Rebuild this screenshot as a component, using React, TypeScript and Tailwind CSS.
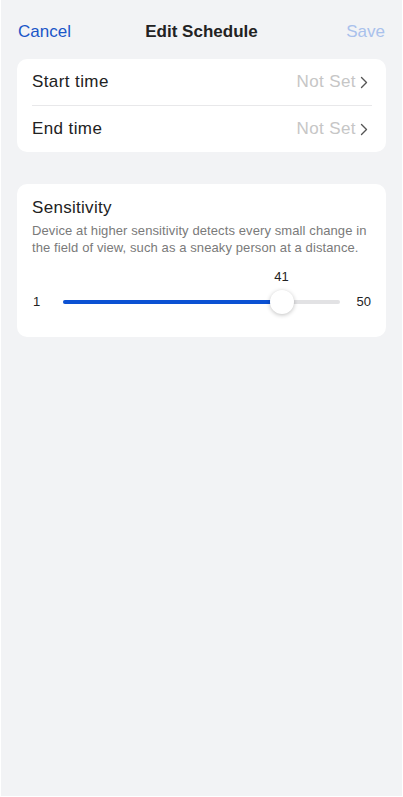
import React from 'react';

const font = { fontFamily: '"Liberation Sans", Arial, sans-serif' };

const Row = ({ label }: { label: string }) => (
    <div className="flex h-[46px] items-center justify-between pr-[18px] tracking-[0.4px]">
        <span className="text-[17px] text-[#222]">{label}</span>
        <span className="flex items-center gap-[4px] text-[17px] text-[#c6c6c6]">
            Not Set
            <svg width="8" height="13" viewBox="0 0 8 13" fill="none">
                <path d="M1.5 1.5L6.5 6.5L1.5 11.5" stroke="#555" strokeWidth="1.4" strokeLinecap="round" strokeLinejoin="round" />
            </svg>
        </span>
    </div>
);

export default function App() {
    const value = 41;
    const pct = (value - 1) / 49;
    // thumb stays inside the track, so its centre travels 12px in from each end
    const thumbLeft = `calc(12px + ${pct} * (100% - 24px))`;

    return (
        <div className="min-h-[797px] w-[403px] bg-[#f2f3f5] border-l border-r border-b border-white" style={font}>
            {/* Nav bar */}
            <div className="grid h-[59px] grid-cols-[1fr_auto_1fr] items-center px-[17px] pt-[4px]">
                <button className="justify-self-start text-[17px] text-[#1a56c8]">Cancel</button>
                <h1 className="text-[17px] font-semibold text-[#222]">Edit Schedule</h1>
                <button className="justify-self-end text-[17px] text-[#a9c1ec]">Save</button>
            </div>

            {/* Schedule card */}
            <div className="mx-[16px] rounded-[10px] bg-white pl-[15px]">
                <Row label="Start time" />
                <div className="mr-[14px] h-px bg-[#e8e8ea]" />
                <Row label="End time" />
            </div>

            {/* Sensitivity card */}
            <div className="mx-[16px] mt-[32px] rounded-[10px] bg-white px-[15px] pt-[12px] pb-[21px]">
                <div className="text-[17px] leading-[24px] tracking-[0.3px] text-[#222]">Sensitivity</div>
                <p className="mt-[2px] text-[13px] leading-[17px] tracking-[0.1px] text-[#7a7a7a]">
                    Device at higher sensitivity detects every small change in the field of view, such as a sneaky person at a distance.
                </p>
                <div className="mt-[11px] flex items-center">
                    <span className="w-[31px] pl-[1px] pt-[21px] text-[13px] text-[#222]">1</span>
                    <div className="flex-1">
                        <div className="relative h-[21px]">
                            <span
                                className="absolute top-0 -translate-x-1/2 text-[13px] text-[#222]"
                                style={{ left: thumbLeft }}
                            >
                                {value}
                            </span>
                        </div>
                        <div className="relative flex h-[28px] items-center">
                            <div className="h-[4px] w-full rounded-full bg-[#e2e2e4]">
                                <div className="h-full rounded-full bg-[#0b51d3]" style={{ width: thumbLeft }} />
                            </div>
                            <div
                                className="absolute top-1/2 h-[24px] w-[24px] -translate-x-1/2 -translate-y-1/2 rounded-full bg-white shadow-[0_1px_4px_rgba(0,0,0,0.25)]"
                                style={{ left: thumbLeft }}
                            />
                        </div>
                    </div>
                    <span className="w-[31px] pt-[21px] text-right text-[13px] text-[#222]">50</span>
                </div>
            </div>
        </div>
    );
}
